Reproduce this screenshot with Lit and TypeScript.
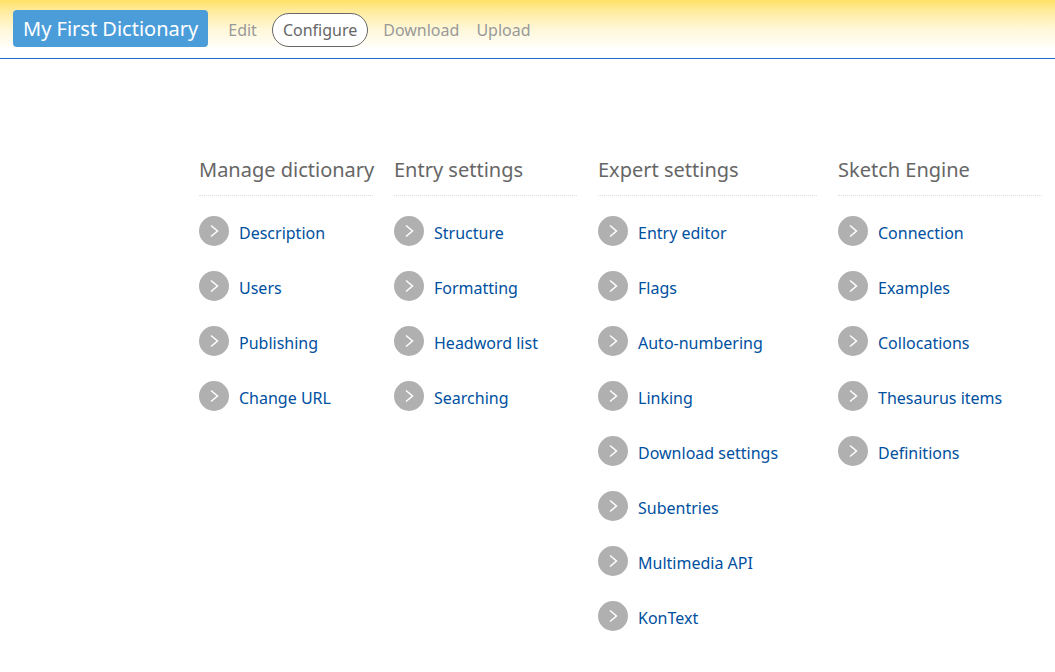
import { LitElement, html, css } from "lit";
import { customElement } from "lit/decorators.js";

const NAV = ["Edit", "Configure", "Download", "Upload"];

const GROUPS = [
  { title: "Manage dictionary", items: ["Description", "Users", "Publishing", "Change URL"] },
  { title: "Entry settings", items: ["Structure", "Formatting", "Headword list", "Searching"] },
  {
    title: "Expert settings",
    items: ["Entry editor", "Flags", "Auto-numbering", "Linking", "Download settings", "Subentries", "Multimedia API", "KonText"],
  },
  { title: "Sketch Engine", items: ["Connection", "Examples", "Collocations", "Thesaurus items", "Definitions"] },
];

@customElement("app-root")
export class AppRoot extends LitElement {
  static styles = css`
    :host {
      display: block;
      min-height: 100vh;
      background: #fff;
      color: #666;
      font-family: "Noto Sans", sans-serif;
      font-size: 16px;
    }
    .topbar {
      box-sizing: border-box;
      height: 59px;
      padding: 10px 13px 0;
      display: flex;
      align-items: flex-start;
      border-bottom: 1px solid #1f6bd0;
      background: linear-gradient(#ffe066, #ffeb98 10px, #fff7d6 28px, #fff 50px);
    }
    .brand {
      padding: 0 10px;
      border-radius: 4px;
      background: #4b9dda;
      color: #fff;
      font-size: 20px;
      line-height: 37px;
      text-decoration: none;
      white-space: nowrap;
    }
    .nav {
      display: flex;
      margin: 3px 0 0 8px;
    }
    .tab {
      padding: 0 11px;
      margin-right: -7px;
      border: 1px solid transparent;
      border-radius: 17px;
      color: #999;
      line-height: 32px;
      text-decoration: none;
    }
    .tab.current {
      margin: 0 3px 0 10px;
      padding: 0 10px;
      border-color: #666;
      background: #fff;
      color: #666;
    }
    .groups {
      display: grid;
      grid-template-columns: minmax(0, 174fr) minmax(0, 183fr) minmax(0, 219fr) minmax(0, 204fr);
      column-gap: 21px;
      padding: 96px 13px 0 199px;
    }
    .title {
      margin: 0 0 20px;
      padding-bottom: 10px;
      border-bottom: 1px dotted #ddd;
      font-size: 20px;
      font-weight: 400;
      line-height: 30px;
      white-space: nowrap;
    }
    .list {
      margin: 0;
      padding: 0;
      list-style: none;
      display: grid;
      row-gap: 23px;
    }
    .link {
      display: flex;
      gap: 10px;
      color: #0050a0;
      line-height: 32px;
      text-decoration: none;
      white-space: nowrap;
    }
    .label {
      padding-top: 2px;
      line-height: 30px;
    }
    .icon {
      display: block;
      width: 30px;
      height: 30px;
    }
  `;

  render() {
    return html`
      <header class="topbar">
        <a class="brand" href="#">My First Dictionary</a>
        <nav class="nav">
          ${NAV.map((name) => html`<a class="tab ${name === "Configure" ? "current" : ""}" href="#">${name}</a>`)}
        </nav>
      </header>
      <main class="groups">
        ${GROUPS.map(
          (group) => html`<section>
            <h2 class="title">${group.title}</h2>
            <ul class="list">
              ${group.items.map(
                (item) => html`<li>
                  <a class="link" href="#">
                    <svg class="icon" viewBox="0 0 30 30" aria-hidden="true">
                      <circle cx="15" cy="15" r="15" fill="#b0b0b0" />
                      <path d="M12 9.5l6.5 5.5-6.5 5.5" fill="none" stroke="#fff" stroke-width="1.5" />
                    </svg>
                    <span class="label">${item}</span>
                  </a>
                </li>`
              )}
            </ul>
          </section>`
        )}
      </main>
    `;
  }
}
